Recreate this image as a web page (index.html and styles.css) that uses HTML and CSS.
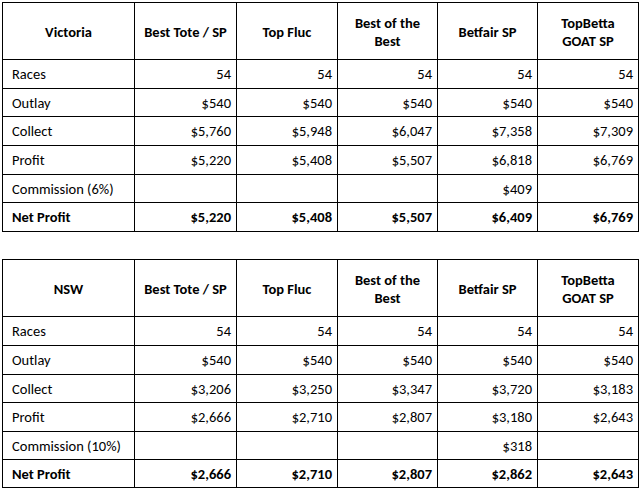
FILE: index.html
```html
<!DOCTYPE html>
<html>
<head>
<meta charset="utf-8">
<link rel="stylesheet" href="styles.css">
</head>
<body>
<div class="page">
<table class="results">
  <colgroup><col class="c0"><col class="c1"><col class="c2"><col class="c3"><col class="c4"><col class="c5"></colgroup>
  <tr class="head"><th>Victoria</th><th>Best Tote / SP</th><th>Top Fluc</th><th>Best of the Best</th><th>Betfair SP</th><th>TopBetta GOAT SP</th></tr>
  <tr class="r29"><td>Races</td><td>54</td><td>54</td><td>54</td><td>54</td><td>54</td></tr>
  <tr class="r28"><td>Outlay</td><td>$540</td><td>$540</td><td>$540</td><td>$540</td><td>$540</td></tr>
  <tr class="r29"><td>Collect</td><td>$5,760</td><td>$5,948</td><td>$6,047</td><td>$7,358</td><td>$7,309</td></tr>
  <tr class="r29"><td>Profit</td><td>$5,220</td><td>$5,408</td><td>$5,507</td><td>$6,818</td><td>$6,769</td></tr>
  <tr class="r28"><td>Commission (6%)</td><td></td><td></td><td></td><td>$409</td><td></td></tr>
  <tr class="r29 total"><td>Net Profit</td><td>$5,220</td><td>$5,408</td><td>$5,507</td><td>$6,409</td><td>$6,769</td></tr>
</table>
<table class="results">
  <colgroup><col class="c0"><col class="c1"><col class="c2"><col class="c3"><col class="c4"><col class="c5"></colgroup>
  <tr class="head"><th>NSW</th><th>Best Tote / SP</th><th>Top Fluc</th><th>Best of the Best</th><th>Betfair SP</th><th>TopBetta GOAT SP</th></tr>
  <tr class="r29"><td>Races</td><td>54</td><td>54</td><td>54</td><td>54</td><td>54</td></tr>
  <tr class="r29"><td>Outlay</td><td>$540</td><td>$540</td><td>$540</td><td>$540</td><td>$540</td></tr>
  <tr class="r28"><td>Collect</td><td>$3,206</td><td>$3,250</td><td>$3,347</td><td>$3,720</td><td>$3,183</td></tr>
  <tr class="r29"><td>Profit</td><td>$2,666</td><td>$2,710</td><td>$2,807</td><td>$3,180</td><td>$2,643</td></tr>
  <tr class="r28"><td>Commission (10%)</td><td></td><td></td><td></td><td>$318</td><td></td></tr>
  <tr class="r28 total"><td>Net Profit</td><td>$2,666</td><td>$2,710</td><td>$2,807</td><td>$2,862</td><td>$2,643</td></tr>
</table>
</div>
</body>
</html>
```
FILE: styles.css
```css
html, body {
  margin: 0;
  padding: 0;
  background: #ffffff;
}
.page {
  padding: 2px 0 0 2px;
  display: flex;
  flex-direction: column;
  gap: 27px;
  font-family: Carlito, Calibri, Lato, "Open Sans", sans-serif;
  font-size: 14.5px;
  color: #000;
}
.results {
  border-collapse: collapse;
  table-layout: fixed;
  width: 637px;
}
.results th, .results td {
  border: 1px solid #000;
  padding: 0 5px 0 9px;
  vertical-align: middle;
  line-height: 18px;
}
.results th {
  font-weight: bold;
  text-align: center;
  padding: 1px 8px 0;
}
.results td {
  text-align: right;
}
.results td:first-child {
  text-align: left;
}
.c0 { width: 132px; }
.c1 { width: 102px; }
.c2 { width: 101px; }
.c3 { width: 100px; }
.c4 { width: 100px; }
.c5 { width: 101px; }
.head { height: 57px; }
.r29 { height: 29px; }
.r28 { height: 28px; }
.total td { font-weight: bold; }
```
